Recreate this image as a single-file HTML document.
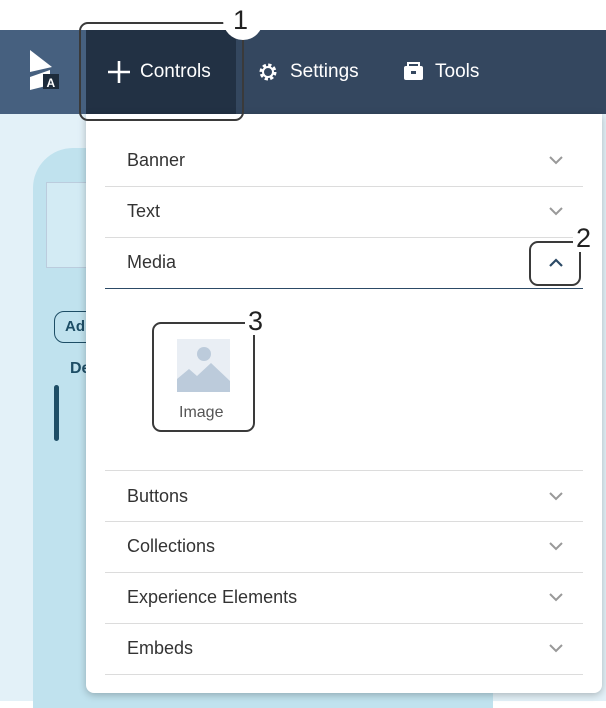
<!DOCTYPE html>
<html><head><style>
body{margin:0;width:606px;height:701px;overflow:hidden;background:#fff;font-family:"Liberation Sans",sans-serif;position:relative}
.a{position:absolute}
.nav{left:0;top:30px;width:606px;height:84px;background:#34475f}
.row{position:absolute;left:105px;width:478px;height:51px;border-bottom:1px solid #dcdcdc;color:#333;font-size:18px}
.row span{position:absolute;left:22px;top:15px}
.row svg{position:absolute;right:20px;top:21px}
.ann{position:absolute;border:2.5px solid #3a3a3a;border-radius:9px}
.num{position:absolute;font-size:27px;color:#222;background:#fff;line-height:28px;padding:0 3px}
</style></head><body>
<div class="a" style="left:0;top:114px;width:606px;height:587px;background:#e3f1f8"></div>
<div class="a" style="left:33px;top:148px;width:460px;height:560px;background:#c0e2ee;border-radius:40px 40px 0 0"></div>
<div class="a" style="left:46px;top:182px;width:60px;height:84px;background:#d3ebf4;border:1px solid #bcd"></div>
<div class="a" style="left:54px;top:311px;width:40px;height:30px;border:1px solid #1e4e66;border-radius:10px;font-size:15px;color:#1e4e66;line-height:30px;padding-left:10px;font-weight:bold">Ad</div>
<div class="a" style="left:70px;top:360px;font-size:16px;font-weight:bold;color:#1e4e66">De</div>
<div class="a" style="left:54px;top:385px;width:5px;height:56px;background:#1e4e66;border-radius:3px"></div>
<div class="a nav"></div>
<div class="a" style="left:0;top:30px;width:86px;height:84px;background:#46607f"></div>
<div class="a" style="left:86px;top:30px;width:150px;height:84px;background:#223144"></div>
<svg class="a" style="left:28px;top:50px" width="34" height="42"><polygon points="2,0 24,17 2,22" fill="#fff"/><polygon points="2,27 22,20 22,35 2,40" fill="#fff"/><rect x="15" y="24" width="16" height="15" fill="#1d2b3b"/><text x="18.5" y="37" fill="#fff" font-size="12" font-weight="bold" font-family="Liberation Sans">A</text></svg>
<svg class="a" style="left:107px;top:60px" width="24" height="24"><path d="M12 1V23M1 12H23" stroke="#fff" stroke-width="2.6"/></svg>
<div class="a" style="left:140px;top:61px;color:#fff;font-size:19px">Controls</div>
<svg class="a" style="left:258px;top:62px" width="20" height="20"><circle cx="10" cy="10" r="6.5" fill="none" stroke="#fff" stroke-width="4" stroke-dasharray="3 2.1"/><circle cx="10" cy="10" r="5" fill="none" stroke="#fff" stroke-width="2"/></svg>
<div class="a" style="left:290px;top:61px;color:#fff;font-size:19px">Settings</div>
<svg class="a" style="left:403px;top:62px" width="21" height="19"><rect x="1" y="4" width="19" height="14" rx="2" fill="#fff"/><rect x="5" y="1" width="11" height="5" fill="none" stroke="#fff" stroke-width="2"/><rect x="8" y="9" width="5" height="3" fill="#34475f"/></svg>
<div class="a" style="left:435px;top:61px;color:#fff;font-size:19px">Tools</div>
<div class="a" style="left:86px;top:114px;width:516px;height:579px;background:#fff;border-radius:0 0 8px 8px;box-shadow:0 2px 8px rgba(0,0,0,.25)"></div>
<div class="row" style="top:135px"><span>Banner</span><svg width="14" height="9"><path d="M1 1L7 7L13 1" fill="none" stroke="#999" stroke-width="2"/></svg></div>
<div class="row" style="top:186px"><span>Text</span><svg width="14" height="9"><path d="M1 1L7 7L13 1" fill="none" stroke="#999" stroke-width="2"/></svg></div>
<div class="row" style="top:237px;border-bottom:1px solid #2c4a66"><span>Media</span><svg width="14" height="9"><path d="M1 8L7 2L13 8" fill="none" stroke="#2c4a66" stroke-width="2.2"/></svg></div>
<div class="a" style="left:177px;top:339px;width:53px;height:53px;background:#e9eef4"></div>
<svg class="a" style="left:177px;top:339px" width="53" height="53"><circle cx="27" cy="15" r="7" fill="#bccbdb"/><path d="M0 40L12 30L20 37L34 24L53 42V53H0Z" fill="#bccbdb"/></svg>
<div class="a" style="left:179px;top:404px;font-size:16px;color:#555">Image</div>
<div class="row" style="top:470px;border-top:1px solid #dcdcdc;height:50px"><span>Buttons</span><svg width="14" height="9"><path d="M1 1L7 7L13 1" fill="none" stroke="#999" stroke-width="2"/></svg></div>
<div class="row" style="top:521px"><span>Collections</span><svg width="14" height="9"><path d="M1 1L7 7L13 1" fill="none" stroke="#999" stroke-width="2"/></svg></div>
<div class="row" style="top:572px"><span>Experience Elements</span><svg width="14" height="9"><path d="M1 1L7 7L13 1" fill="none" stroke="#999" stroke-width="2"/></svg></div>
<div class="row" style="top:623px"><span>Embeds</span><svg width="14" height="9"><path d="M1 1L7 7L13 1" fill="none" stroke="#999" stroke-width="2"/></svg></div>
<div class="ann" style="left:79px;top:22px;width:161px;height:95px"></div>
<div class="a" style="left:223px;top:0;width:40px;height:40px;border-radius:50%;background:#fff"></div>
<div class="num" style="left:230px;top:6px;background:none">1</div>
<div class="ann" style="left:529px;top:241px;width:48px;height:41px"></div>
<div class="num" style="left:573px;top:224px">2</div>
<div class="ann" style="left:152px;top:322px;width:99px;height:106px"></div>
<div class="num" style="left:245px;top:307px">3</div>
</body></html>
